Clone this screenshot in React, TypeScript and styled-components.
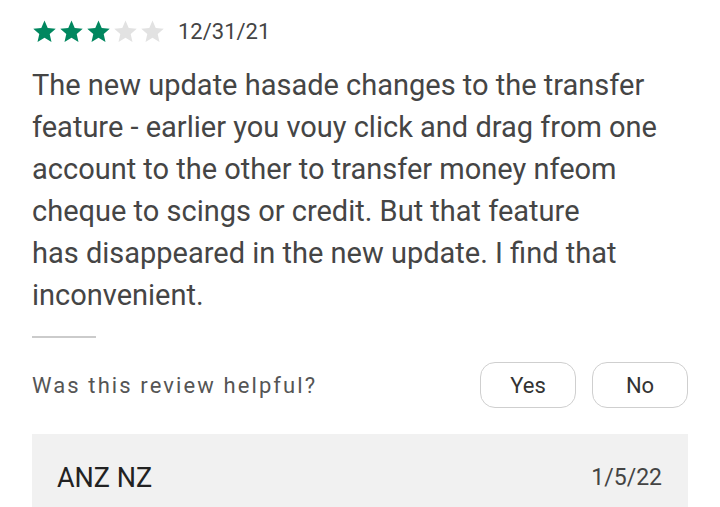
import styled, {createGlobalStyle} from "styled-components";

const GlobalStyle = createGlobalStyle`
    body {
        margin: 0;
        background: #ffffff;
        font-family: Roboto, "Liberation Sans", sans-serif;
    }
`;

const STAR_PATH = "M12 1.5l3.1 7.1 7.7.7-5.8 5.1 1.7 7.6L12 18l-6.7 4 1.7-7.6-5.8-5.1 7.7-.7z";

function Star({filled}: { filled: boolean }) {
    return (
        <svg width="25" height="25" viewBox="0 0 24 24">
            <path d={STAR_PATH} fill={filled ? "#01875f" : "#e2e2e2"}/>
        </svg>
    );
}

export default function App() {
    const rating = 3;
    return (
        <Page>
            <GlobalStyle/>
            <Header>
                <Stars>
                    {[0, 1, 2, 3, 4].map(i => <Star key={i} filled={i < rating}/>)}
                </Stars>
                <ReviewDate>12/31/21</ReviewDate>
            </Header>
            <Body>
                The new update hasade changes to the transfer<br/>
                feature - earlier you vouy click and drag from one<br/>
                account to the other to transfer money nfeom<br/>
                cheque to scings or credit. But that feature<br/>
                has disappeared in the new update. I find that<br/>
                inconvenient.
            </Body>
            <Divider/>
            <HelpfulRow>
                <HelpfulText>Was this review helpful?</HelpfulText>
                <Buttons>
                    <VoteButton>Yes</VoteButton>
                    <VoteButton>No</VoteButton>
                </Buttons>
            </HelpfulRow>
            <Reply>
                <ReplyName>ANZ NZ</ReplyName>
                <ReplyDate>1/5/22</ReplyDate>
            </Reply>
        </Page>
    );
}

const Page = styled.div`
    width: 656px;
    padding: 0 32px;
    height: 507px;
    overflow: hidden;
`;

const Header = styled.div`
    display: flex;
    align-items: center;
    height: 24px;
    margin-top: 19px;
`;

const Stars = styled.div`
    display: flex;
    gap: 2px;
`;

const ReviewDate = styled.span`
    margin-left: 13px;
    font-size: 22px;
    color: #444;
`;

const Body = styled.p`
    margin: 21px 0 0;
    font-size: 29px;
    line-height: 42px;
    color: #454545;
`;

const Divider = styled.div`
    width: 64px;
    height: 2px;
    background: #cbcbcb;
    margin-top: 20px;
`;

const HelpfulRow = styled.div`
    display: flex;
    align-items: center;
    justify-content: space-between;
    margin-top: 24px;
`;

const HelpfulText = styled.span`
    font-size: 22px;
    letter-spacing: 2.1px;
    color: #555;
`;

const Buttons = styled.div`
    display: flex;
    gap: 16px;
`;

const VoteButton = styled.button`
    width: 96px;
    height: 46px;
    border: 1.5px solid #cfcfcf;
    border-radius: 15px;
    background: #fff;
    font-family: Roboto, "Liberation Sans", sans-serif;
    font-size: 22px;
    color: #333;
    cursor: pointer;
`;

const Reply = styled.div`
    display: flex;
    align-items: flex-start;
    justify-content: space-between;
    margin-top: 26px;
    padding: 28px 26px 0 25px;
    height: 90px;
    background: #f1f1f1;
`;

const ReplyName = styled.span`
    font-size: 27px;
    color: #222;
`;

const ReplyDate = styled.span`
    font-size: 23px;
    line-height: 32px;
    color: #444;
`;
